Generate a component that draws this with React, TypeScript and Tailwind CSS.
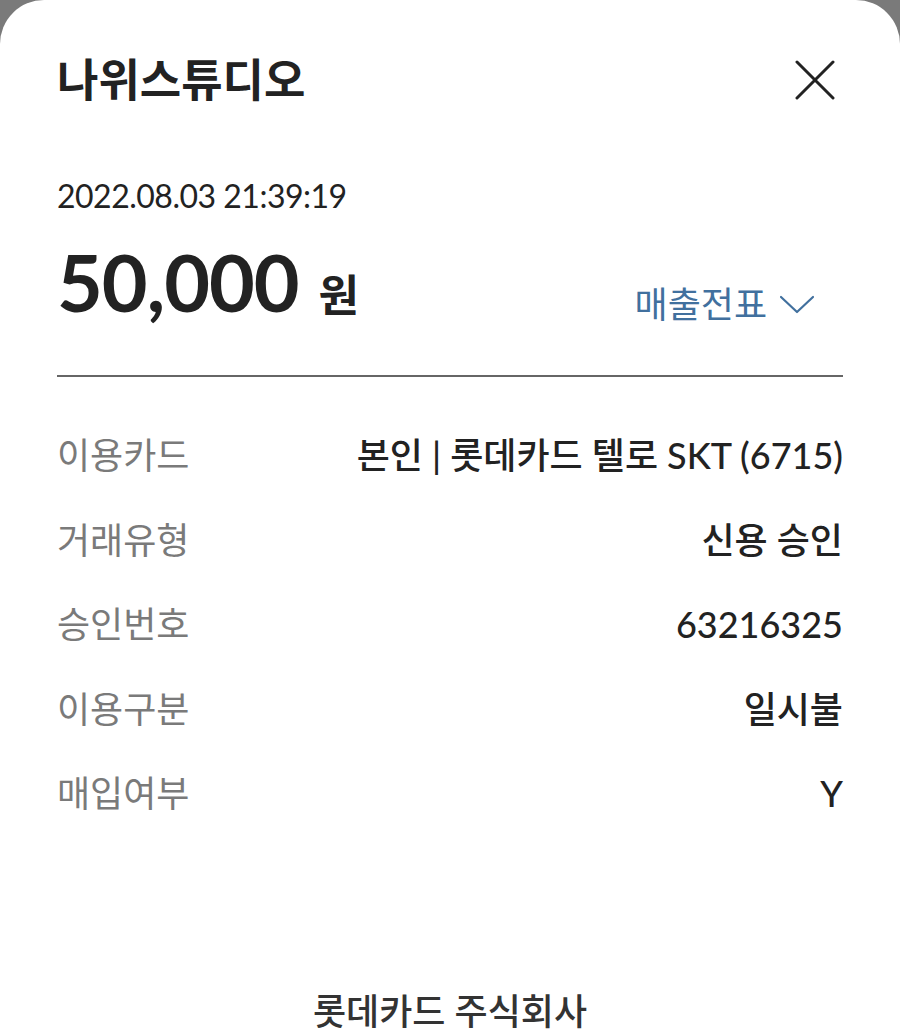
import React from 'react';

const rows: { label: string; value: string }[] = [
  { label: '이용카드', value: '본인 | 롯데카드 텔로 SKT (6715)' },
  { label: '거래유형', value: '신용 승인' },
  { label: '승인번호', value: '63216325' },
  { label: '이용구분', value: '일시불' },
  { label: '매입여부', value: 'Y' },
];

const App: React.FC = () => {
  return (
    <div className="h-[1036px] w-[900px] overflow-hidden bg-[#7a7a7a] font-['Lato','Noto_Sans_CJK_KR',sans-serif]">
      <div className="flex h-full flex-col rounded-t-[44px] bg-white px-[57px]">
        <header className="flex items-center justify-between pt-[52px]">
          <h1 className="text-[45px] font-bold leading-[56px] text-[#222]">나위스튜디오</h1>
          <button className="mr-[8px] text-[#222]">
            <svg width="40" height="40" viewBox="0 0 40 40" fill="none" stroke="currentColor" strokeWidth="3" strokeLinecap="round">
              <path d="M2 2L38 38M38 2L2 38" />
            </svg>
          </button>
        </header>

        <div className="mt-[68px] text-[32px] leading-[40px] tracking-[-0.5px] text-[#222]">2022.08.03 21:39:19</div>

        <div className="mt-[18px] flex items-end justify-between">
          <div className="flex items-baseline gap-[20px] text-[#222]">
            <span className="text-[79px] font-bold leading-[96px] tracking-[-1px]">50,000</span>
            <span className="text-[44px] font-bold">원</span>
          </div>
          <button className="mb-[2px] mr-[28px] flex items-center gap-[12px] text-[36px] leading-[48px] text-[#41709e]">
            <span>매출전표</span>
            <svg width="36" height="20" viewBox="0 0 36 20" fill="none" stroke="currentColor" strokeWidth="2.2" strokeLinecap="round" strokeLinejoin="round">
              <path d="M2 3L18 18L34 3" />
            </svg>
          </button>
        </div>

        <div className="mt-[45px] h-[2px] bg-[#666]" />

        <dl className="mt-[36px] flex flex-col">
          {rows.map((r) => (
            <div key={r.label} className="flex h-[84.5px] items-center justify-between">
              <dt className="text-[36px] text-[#7a7a7a]">{r.label}</dt>
              <dd className="text-[36px] font-medium text-[#222]">{r.value}</dd>
            </div>
          ))}
        </dl>

        <footer className="mt-auto text-center text-[36px] font-medium leading-[50px] text-[#333]">롯데카드 주식회사</footer>
      </div>
    </div>
  );
};

export default App;
